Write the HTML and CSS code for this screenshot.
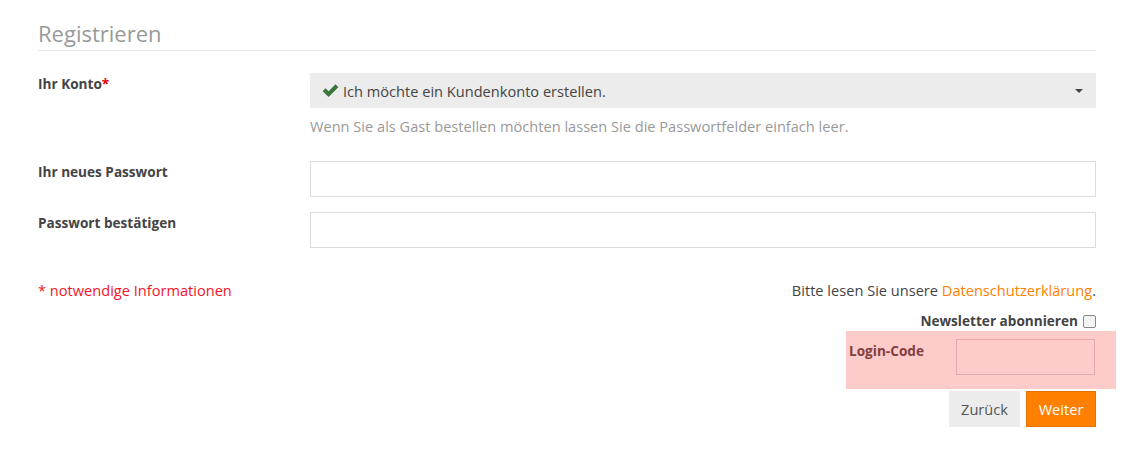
FILE: index.html
```html
<!DOCTYPE html>
<html lang="de">
<head>
<meta charset="utf-8">
<title>Registrieren</title>
<link rel="stylesheet" href="styles.css">
</head>
<body>
<div class="page">
  <h2 class="title">Registrieren</h2>
  <div class="row">
    <label class="label">Ihr Konto<span class="req">*</span></label>
    <div class="field">
      <div class="select">
        <svg class="check" width="17" height="15" viewBox="0 0 16 14"><path d="M0.6 7.6 L3.3 4.9 L6.2 7.8 L12.7 1.2 L15.4 3.9 L6.2 13 Z" fill="#3c763d"/></svg>
        <span>Ich möchte ein Kundenkonto erstellen.</span>
        <span class="caret"></span>
      </div>
      <p class="help">Wenn Sie als Gast bestellen möchten lassen Sie die Passwortfelder einfach leer.</p>
    </div>
  </div>
  <div class="row row-pw">
    <label class="label">Ihr neues Passwort</label>
    <div class="field"><input class="input" type="password"></div>
  </div>
  <div class="row row-pw2">
    <label class="label">Passwort bestätigen</label>
    <div class="field"><input class="input" type="password"></div>
  </div>
  <div class="info">
    <span class="required-note">* notwendige Informationen</span>
    <span class="privacy">Bitte lesen Sie unsere <a href="#">Datenschutzerklärung</a>.</span>
  </div>
  <div class="newsletter">
    <label>Newsletter abonnieren</label>
    <span class="checkbox"></span>
  </div>
  <div class="login-code">
    <label>Login-Code</label>
    <input class="code-input" type="text">
  </div>
  <div class="buttons">
    <button class="btn btn-back">Zurück</button>
    <button class="btn btn-next">Weiter</button>
  </div>
</div>
</body>
</html>
```

FILE: styles.css
```css
* { box-sizing: border-box; }
html, body { margin: 0; padding: 0; background: #fff; }
body {
  font-family: "Open Sans", "Noto Sans", sans-serif;
  font-size: 14.6px;
  color: #444;
}
.page {
  width: 1058px;
  margin-left: 38px;
  padding-top: 17px;
}
.title {
  margin: 0;
  font-size: 22px;
  font-weight: 400;
  color: #999;
  line-height: 32px;
  border-bottom: 1px solid #e5e5e5;
  padding-bottom: 1px;
}
.row {
  display: flex;
  margin-top: 22px;
}
.label {
  width: 272px;
  font-weight: 700;
  font-size: 13.6px;
  color: #444;
  padding-top: 2px;
  line-height: 18px;
}
.req { color: #e00; }
.field { flex: 1; }
.select {
  height: 35px;
  background: #ececec;
  display: flex;
  align-items: center;
  padding-left: 12px;
  color: #444;
  position: relative;
}
.check { margin-right: 4px; }
.caret {
  position: absolute;
  right: 13px;
  top: 16px;
  border-left: 4px solid transparent;
  border-right: 4px solid transparent;
  border-top: 4px solid #444;
}
.help {
  margin: 9px 0 0;
  color: #999;
  line-height: 18px;
}
.row-pw { margin-top: 26px; }
.row-pw2 { margin-top: 15px; }
.row-pw .label, .row-pw2 .label { padding-top: 2px; }
.input {
  display: block;
  width: 100%;
  height: 36px;
  border: 1px solid #ddd;
  background: #fff;
  margin: 0;
}
.info {
  display: flex;
  justify-content: space-between;
  margin-top: 32px;
  line-height: 20px;
}
.required-note { color: #f0142a; }
.privacy { color: #444; }
.privacy a { color: #ff7f00; text-decoration: none; }
.newsletter {
  display: flex;
  justify-content: flex-end;
  align-items: center;
  margin-top: 12px;
  font-weight: 700;
  font-size: 13.6px;
  line-height: 18px;
}
.checkbox {
  width: 13px;
  height: 13px;
  border: 1px solid #888;
  border-radius: 2px;
  background: #f3f3f3;
  margin-left: 5px;
}
.login-code {
  display: flex;
  align-items: flex-start;
  margin-left: auto;
  margin-right: -20px;
  margin-top: 1px;
  width: 270px;
  height: 58px;
  background: #fecbcb;
  padding: 8px 21px 0 3px;
}
.login-code label {
  font-weight: 700;
  font-size: 13.6px;
  color: #813f3f;
  width: 107px;
  padding-top: 3px;
  line-height: 18px;
}
.code-input {
  width: 139px;
  height: 36px;
  border: 1px solid #e6a9a9;
  background: #fecbcb;
  margin: 0;
}
.buttons {
  display: flex;
  justify-content: flex-end;
  gap: 6px;
  margin-top: 2px;
}
.btn {
  font-family: inherit;
  font-size: 14.6px;
  height: 36px;
  padding: 0;
  border: 1px solid #ececec;
  background: #ececec;
  color: #555;
  cursor: pointer;
}
.btn-back { width: 71px; }
.btn-next {
  width: 70px;
  background: #ff7f00;
  border-color: #e86f00;
  color: #fff;
}
```
